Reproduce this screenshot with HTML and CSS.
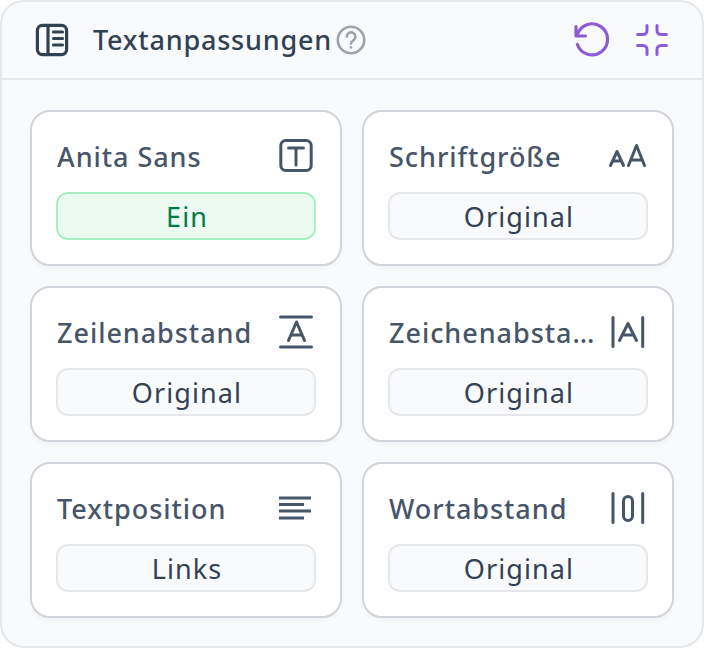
FILE: index.html
```html
<!DOCTYPE html>
<html lang="de">
<head>
<meta charset="utf-8">
<title>Textanpassungen</title>
<link rel="stylesheet" href="styles.css">
</head>
<body>
<section class="panel">
  <header class="head">
    <svg class="head-icon" viewBox="0 0 36 36" fill="none" stroke="#334155" stroke-width="3.200" stroke-linecap="round" stroke-linejoin="round"><rect x="3.400" y="3.400" width="29.200" height="29.200" rx="5"/><path d="M14 4v28M19.500 10h9M19.500 16.500h9M19.500 23h9"/></svg>
    <h1 class="title">Textanpassungen</h1>
    <svg class="help" viewBox="0 0 30 30" fill="none" stroke="#9ca3af" stroke-width="2.600" stroke-linecap="round"><circle cx="15" cy="15" r="13.200"/><path d="M10.800 11.600a4.300 4.300 0 1 1 6.600 3.700c-1.500.9-2.400 1.700-2.400 3.200"/><path d="M15 22.400v.1"/></svg>
    <div class="actions">
      <svg class="act" viewBox="0 0 36 36" fill="none" stroke="#8b5cd6" stroke-width="3.200" stroke-linecap="round" stroke-linejoin="round"><path d="M2 4.500v9.500h9.500"/><path d="M3.200 12.800A15.500 15.500 0 1 1 3.400 22.500"/></svg>
      <svg class="act" viewBox="0 0 36 36" fill="none" stroke="#8b5cd6" stroke-width="3" stroke-linecap="round" stroke-linejoin="round"><path d="M13 3.500v5a4 4 0 0 1-4 4H3.500M23 3.500v5a4 4 0 0 0 4 4h5.500M13 32.500v-5a4 4 0 0 0-4-4H3.500M23 32.500v-5a4 4 0 0 1 4-4h5.500"/></svg>
    </div>
  </header>
  <div class="grid">
    <article class="card">
      <div class="row"><span class="label">Anita Sans</span>
        <svg class="ico" viewBox="0 0 36 36" fill="none" stroke="#475569" stroke-width="3" stroke-linecap="round" stroke-linejoin="round"><rect x="2.800" y="2.500" width="30.400" height="30" rx="5"/><path d="M10.500 10h15M18 10v17"/></svg></div>
      <div class="pill on">Ein</div>
    </article>
    <article class="card">
      <div class="row"><span class="label">Schriftgröße</span>
        <svg class="ico-wide" viewBox="0 0 40 36" fill="none" stroke="#475569" stroke-width="3" stroke-linecap="round" stroke-linejoin="round"><path d="M2.500 27.500L9 13.500l6.500 14M4.800 23h8.400"/><path d="M20.500 27.500l8-20 8 20M23.500 22h10"/></svg></div>
      <div class="pill">Original</div>
    </article>
    <article class="card">
      <div class="row"><span class="label">Zeilenabstand</span>
        <svg class="ico" viewBox="0 0 36 36" fill="none" stroke="#475569" stroke-width="3" stroke-linecap="round" stroke-linejoin="round"><path d="M2.500 3h31M2.500 33h31M10.500 26.500L18.500 8l8 18.500M13 21h11"/></svg></div>
      <div class="pill">Original</div>
    </article>
    <article class="card">
      <div class="row"><span class="label">Zeichenabstand</span>
        <svg class="ico" viewBox="0 0 36 36" fill="none" stroke="#475569" stroke-width="3" stroke-linecap="round" stroke-linejoin="round"><path d="M3 3.500v29M32.700 3.500v29M9.500 26.500L18 9.500l8.500 17M12 21h12"/></svg></div>
      <div class="pill">Original</div>
    </article>
    <article class="card">
      <div class="row"><span class="label">Textposition</span>
        <svg class="ico" viewBox="0 0 36 36" fill="none" stroke="#475569" stroke-width="3"><path d="M1 8h32M1 14.500h25M1 21h32M1 28h25"/></svg></div>
      <div class="pill">Links</div>
    </article>
    <article class="card">
      <div class="row"><span class="label">Wortabstand</span>
        <svg class="ico" viewBox="0 0 36 36" fill="none" stroke="#475569" stroke-width="3" stroke-linecap="round" stroke-linejoin="round"><path d="M3 3.500v29M32.700 3.500v29"/><rect x="13.500" y="6.500" width="9" height="24" rx="4.500"/></svg></div>
      <div class="pill">Original</div>
    </article>
  </div>
</section>
</body>
</html>
```
FILE: styles.css
```css
* { box-sizing: border-box; }
html, body { margin: 0; padding: 0; background: #fff; }
body { width: 704px; height: 648px; font-family: "Noto Sans", sans-serif; }
.panel { width: 704px; height: 648px; background: #f9fafb; border: 2px solid #e5e7eb; border-radius: 24px; overflow: hidden; }
.head { height: 78px; border-bottom: 2px solid #e5e7eb; display: flex; align-items: center; padding: 0 32px; margin-bottom: 30px; }
.head-icon { width: 36px; height: 36px; flex: none; }
.title { margin: 0 0 0 23px; font-size: 27px; font-weight: 500; letter-spacing: 0.8px; color: #334155; line-height: 36px; }
.help { width: 30px; height: 30px; margin-left: 4px; flex: none; }
.actions { margin-left: auto; display: flex; gap: 24px; }
.act { width: 36px; height: 36px; display: block; }
.grid { display: grid; grid-template-columns: 312px 312px; grid-auto-rows: 156px; gap: 20px; padding: 0 28px; }
.card { background: #fff; border: 2px solid #d1d5db; border-radius: 20px; padding: 26px 24px 24px; box-shadow: 0 2px 4px rgba(0,0,0,.04); display: flex; flex-direction: column; }
.row { height: 36px; margin-bottom: 18px; display: flex; align-items: center; justify-content: space-between; gap: 12px; }
.label { min-width: 0; margin-left: 1px; overflow: hidden; text-overflow: ellipsis; font-size: 27px; font-weight: 500; letter-spacing: 0.95px; color: #475569; white-space: nowrap; }
.ico { width: 36px; height: 36px; flex: none; margin-right: 2px; }
.ico-wide { width: 40px; height: 36px; flex: none; }
.pill { height: 48px; padding-left: 2px; border: 2px solid #e5e7eb; border-radius: 12px; background: #f9fafb; color: #334155; font-size: 27px; font-weight: 400; letter-spacing: 1.1px; display: flex; align-items: center; justify-content: center; }
.pill.on { background: #ebfbf2; border-color: #abeec6; color: #047a45; }
```
